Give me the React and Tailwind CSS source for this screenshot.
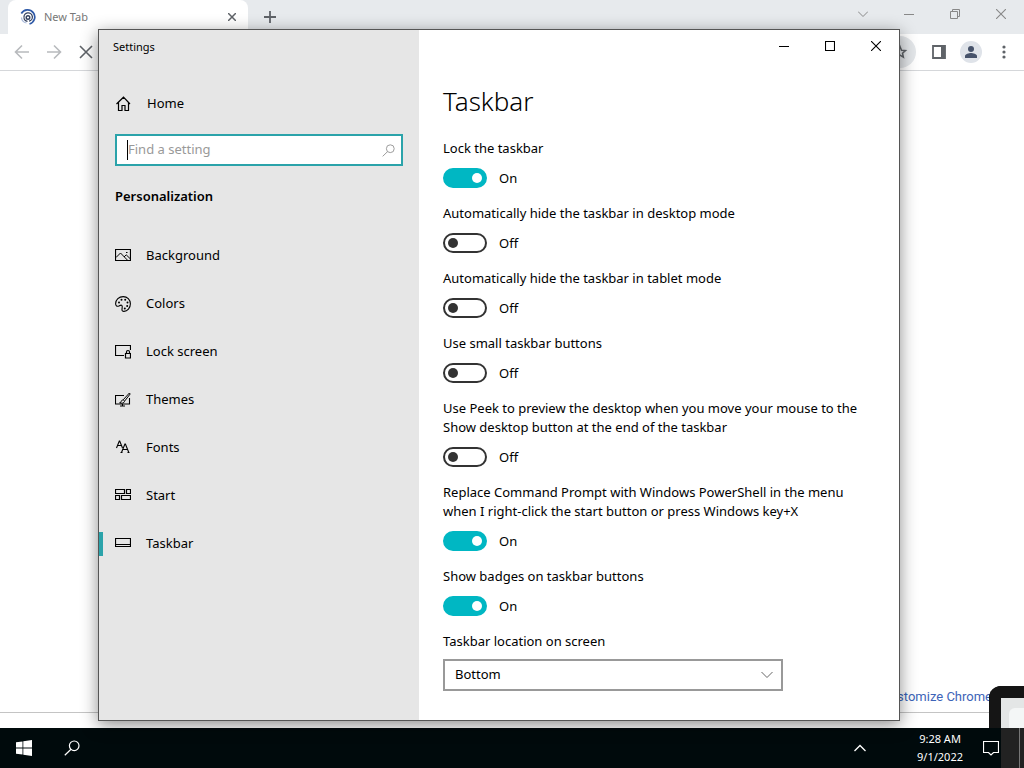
import { useState } from "react";

const navItems = [
  { label: "Background", Icon: BackgroundIcon },
  { label: "Colors", Icon: ColorsIcon },
  { label: "Lock screen", Icon: LockScreenIcon },
  { label: "Themes", Icon: ThemesIcon },
  { label: "Fonts", Icon: FontsIcon },
  { label: "Start", Icon: StartIcon },
  { label: "Taskbar", Icon: TaskbarIcon, active: true },
];

const options = [
  { id: "lock", label: "Lock the taskbar", on: true },
  { id: "hide-desktop", label: "Automatically hide the taskbar in desktop mode", on: false },
  { id: "hide-tablet", label: "Automatically hide the taskbar in tablet mode", on: false },
  { id: "small-buttons", label: "Use small taskbar buttons", on: false },
  {
    id: "peek",
    label:
      "Use Peek to preview the desktop when you move your mouse to the Show desktop button at the end of the taskbar",
    on: false,
  },
  {
    id: "powershell",
    label:
      "Replace Command Prompt with Windows PowerShell in the menu when I right-click the start button or press Windows key+X",
    on: true,
  },
  { id: "badges", label: "Show badges on taskbar buttons", on: true },
];

function Svg({ size = 16, className, children }) {
  return (
    <svg
      xmlns="http://www.w3.org/2000/svg"
      width={size}
      height={size}
      viewBox={`0 0 ${size} ${size}`}
      fill="none"
      stroke="currentColor"
      strokeWidth="1"
      className={className}
      aria-hidden="true"
    >
      {children}
    </svg>
  );
}

function HomeIcon() {
  return (
    <Svg>
      <path d="M1.5 8 8.500 1.200l6.500 6.800M3.500 6.500v8h3.500v-5h3v5h3.500v-8" strokeWidth="1.2" />
    </Svg>
  );
}

function BackgroundIcon() {
  return (
    <Svg>
      <path d="M.5 1.500h15v11H.5z" strokeWidth="1.2" />
      <path d="M1 9.500 5.500 5l7 7.200M9 9l2.200-2.200L15.500 11" />
      <path d="M11 4.500h1.500" />
    </Svg>
  );
}

function ColorsIcon() {
  return (
    <Svg>
      <path
        d="M8.200.6c4 0 7.200 3 7.200 7.200 0 4.200-3 7.600-6.400 7.600-1.700 0-2.200-1-2-2.300.2-1.500.7-2.800-.2-3.700-.8-.8-1.800 0-3 .6C2.200 10.700.6 10 .6 7.800.6 3.700 4 .6 8.200.6Z"
        strokeWidth="1.1"
      />
      <g fill="currentColor" stroke="none">
        <circle cx="4" cy="6.600" r="1" />
        <circle cx="6.500" cy="3.800" r="1" />
        <circle cx="10.200" cy="3.800" r="1" />
        <circle cx="12.500" cy="6.600" r="1" />
        <circle cx="12.200" cy="10" r="1" />
        <circle cx="9.800" cy="12.400" r="1" />
      </g>
    </Svg>
  );
}

function LockScreenIcon() {
  return (
    <Svg>
      <path d="M9 11.500H.5v-10h15V6" strokeWidth="1.2" />
      <path d="M10.500 9.500h5v4.500h-5zM11.500 9.500V8a1.500 1.500 0 0 1 3 0v1.500" strokeWidth="1.2" />
    </Svg>
  );
}

function ThemesIcon() {
  return (
    <Svg>
      <path d="M9 3.500H.5v8.500h14V6M7.500 12v2M5 14h5" strokeWidth="1.1" />
      <path d="m14.400 1-6.200 6.800 1.400 1.300L15.200 2zM8.200 8c-1.500 0-2 .8-2.200 2-.2.600-.8.800-1.400.8 2 .8 4.600.4 5-1.500" />
    </Svg>
  );
}

function FontsIcon() {
  return (
    <Svg>
      <path d="M1.500 8 4.300 1h.4l2.800 7M2.500 5.500h4" strokeWidth="1.1" />
      <path d="m6.500 12.500 3.400-8.500h.5l3.400 8.500M7.700 9.500h5M5.500 12.500h2M12.500 12.500h2" strokeWidth="1.1" />
    </Svg>
  );
}

function StartIcon() {
  return (
    <Svg>
      <path d="M.5 1.500h9v4h-9zM11.500 1.500h4v4h-4zM.5 7.500h4v4h-4zM6.500 7.500h9v4h-9z" strokeWidth="1.2" />
    </Svg>
  );
}

function TaskbarIcon() {
  return (
    <Svg>
      <path d="M.5 2.500h15v8H.5zM.5 8.500h15" strokeWidth="1.2" />
    </Svg>
  );
}

function SearchIcon({ size = 16, className }) {
  return (
    <svg
      width={size}
      height={size}
      viewBox="0 0 16 16"
      fill="none"
      stroke="currentColor"
      className={className}
      aria-hidden="true"
    >
      <circle cx="10.200" cy="5.800" r="4.800" strokeWidth="1.200" />
      <path d="M7 9.200.8 15.200" strokeWidth="1.200" />
    </svg>
  );
}

function MinimizeIcon() {
  return (
    <Svg size={10}>
      <path d="M0 5.500h10" />
    </Svg>
  );
}

function CloseIcon() {
  return (
    <Svg size={10}>
      <path d="m0 0 10 10M10 0 0 10" strokeWidth="1.1" />
    </Svg>
  );
}

function ChromeWindow() {
  return (
    <div className="flex h-full flex-col bg-white text-[#5f6368]">
      <div className="flex h-[34px] bg-[#e7eaed]">
        <div className="ml-2 flex w-60 items-center rounded-t-lg bg-white pr-2 pl-3">
          <svg width="16" height="16" viewBox="0 0 16 16" fill="none" aria-hidden="true">
            <path d="M1.300 4.500A7.200 7.200 0 1 1 9.500 15" stroke="#2f5aa8" strokeWidth="1.700" />
            <path d="M4 8.500a4.200 4.200 0 1 1 5 3.700" stroke="#33415f" strokeWidth="1.300" />
            <path d="M1.500 8.500a6 6 0 0 0 5 5.500" stroke="#a9badb" strokeWidth="1.200" />
            <circle cx="8" cy="8.500" r="1.800" stroke="#33415f" strokeWidth="1.400" />
            <path d="M4 8.500c0 2 1.500 3.500 3.500 3.800" stroke="#33415f" strokeWidth="1.200" />
          </svg>
          <span className="ml-2 flex-1 text-[11px] text-[#777]">New Tab</span>
          <button type="button" aria-label="Close tab" className="flex size-4 items-center justify-center">
            <Svg size={8}>
              <path d="m0 0 8 8M8 0 0 8" strokeWidth="1.500" />
            </Svg>
          </button>
        </div>
        <button type="button" aria-label="New tab" className="ml-4 flex items-center">
          <Svg size={12}>
            <path d="M6 0v12M0 6h12" strokeWidth="1.800" />
          </Svg>
        </button>
        <div className="ml-auto flex h-7 text-[#888]">
          <button type="button" aria-label="Search tabs" className="flex w-[46px] items-center justify-center">
            <Svg size={10}>
              <path d="m0 2.500 5 5 5-5" />
            </Svg>
          </button>
          <button type="button" aria-label="Minimize" className="flex w-[46px] items-center justify-center">
            <MinimizeIcon />
          </button>
          <button type="button" aria-label="Restore" className="flex w-[46px] items-center justify-center">
            <Svg size={10}>
              <path d="M.5 2.500h7v7h-7zM2.500 2.500v-2h7v7h-2" />
            </Svg>
          </button>
          <button type="button" aria-label="Close" className="flex w-[46px] items-center justify-center">
            <CloseIcon />
          </button>
        </div>
      </div>
      <div className="flex h-[37px] items-center border-b border-[#d5d7da] pr-3 pl-3.5">
        <button type="button" aria-label="Back" className="text-[#b8babd]">
          <Svg>
            <path d="M15 8H2M8 1.500 1.500 8 8 14.500" strokeWidth="1.600" />
          </Svg>
        </button>
        <button type="button" aria-label="Forward" className="ml-4 text-[#b8babd]">
          <Svg>
            <path d="M1 8h13M8 1.500 14.500 8 8 14.500" strokeWidth="1.600" />
          </Svg>
        </button>
        <button type="button" aria-label="Stop" className="ml-4">
          <Svg>
            <path d="m2 2 12 12M14 2 2 14" strokeWidth="1.600" />
          </Svg>
        </button>
        <div className="ml-auto flex items-center">
          <button
            type="button"
            aria-label="Bookmark"
            className="flex size-8 items-center justify-center rounded-full bg-[#e4e7ea]"
          >
            <Svg>
              <path
                d="m8 2.500 1.500 3.700 4 .3-3 2.700.9 4L8 11.200l-3.400 2 .9-4-3-2.700 4-.3z"
                strokeWidth="1.500"
              />
            </Svg>
          </button>
          <button type="button" aria-label="Side panel" className="ml-4">
            <Svg size={14}>
              <path d="M1 1h12v12H1z" strokeWidth="1.800" />
              <path d="M11 1v12" strokeWidth="4" />
            </Svg>
          </button>
          <button
            type="button"
            aria-label="Profile"
            className="ml-3.5 flex size-[22px] items-center justify-center rounded-full bg-[#dfe3e9] text-[#46526a]"
          >
            <svg width="14" height="14" viewBox="0 0 14 14" fill="currentColor" aria-hidden="true">
              <circle cx="7" cy="4" r="3" />
              <path d="M1 13v-2c0-2 4-3 6-3s6 1 6 3v2z" />
            </svg>
          </button>
          <button type="button" aria-label="Menu" className="ml-3.5">
            <svg width="16" height="16" viewBox="0 0 16 16" fill="currentColor" aria-hidden="true">
              <circle cx="8" cy="3" r="1.600" />
              <circle cx="8" cy="8" r="1.600" />
              <circle cx="8" cy="13" r="1.600" />
            </svg>
          </button>
        </div>
      </div>
      <div className="flex flex-1 items-end justify-end border-b border-[#c4c4c4] pr-8 pb-[5px]">
        <button type="button" className="font-[Roboto,sans-serif] text-[13px] leading-5 text-[#3d64b8]">
          Customize Chrome
        </button>
      </div>
      <div className="h-[15px]" />
    </div>
  );
}

function Sidebar() {
  return (
    <aside className="flex w-80 shrink-0 flex-col bg-[#e6e6e6]">
      <h1 className="px-3.5 pt-2 text-[11px] leading-[18px]">Settings</h1>
      <a href="#home" className="mt-6 flex h-12 items-center gap-4 px-4">
        <HomeIcon />
        Home
      </a>
      <label className="mx-4 mt-1.5 flex h-8 items-center border-2 border-[#2ba3aa] bg-white pr-1.5 pl-2.5">
        <span className="h-5 w-px bg-black" />
        <input
          type="text"
          aria-label="Find a setting"
          placeholder="Find a setting"
          className="min-w-0 flex-1 outline-none placeholder:text-[#999]"
        />
        <SearchIcon size={13} className="text-[#999]" />
      </label>
      <h2 className="mt-5 px-4 text-[13px] leading-5 font-semibold">Personalization</h2>
      <nav className="mt-[26px]">
        {navItems.map(({ label, Icon, active }) => (
          <a key={label} href={`#${label}`} className="flex h-12 items-center">
            <span className={active ? "h-6 w-1 bg-[#2ba3aa]" : "h-6 w-1"} />
            <span className="mr-[15px] ml-3">
              <Icon />
            </span>
            {label}
          </a>
        ))}
      </nav>
    </aside>
  );
}

function ToggleRow({ id, label, on }) {
  const [checked, setChecked] = useState(on);
  return (
    <div className="mb-4">
      <label htmlFor={id} className="block leading-[19px]">
        {label}
      </label>
      <div className="mt-2.5 flex h-5 items-center gap-3">
        <input
          id={id}
          type="checkbox"
          checked={checked}
          onChange={() => setChecked(!checked)}
          className="flex h-5 w-11 appearance-none items-center rounded-full border-2 border-[#333] px-[3px] before:size-2.5 before:rounded-full before:bg-[#333] checked:justify-end checked:border-[#00b7c3] checked:bg-[#00b7c3] checked:before:bg-white"
        />
        <span className="pt-0.5">{checked ? "On" : "Off"}</span>
      </div>
    </div>
  );
}

function SettingsWindow() {
  return (
    <section className="absolute top-[29px] right-[124px] bottom-[7px] left-[98px] flex border border-[#555] bg-white text-[13px] text-black shadow-[0_4px_16px_rgba(0,0,0,0.45)]">
      <Sidebar />
      <main className="min-w-0 flex-1">
        <div className="flex h-8 justify-end">
          <button type="button" aria-label="Minimize" className="flex w-[46px] items-center justify-center">
            <MinimizeIcon />
          </button>
          <button type="button" aria-label="Maximize" className="flex w-[46px] items-center justify-center">
            <Svg size={10}>
              <path d="M.5.5h9v9h-9z" strokeWidth="1.1" />
            </Svg>
          </button>
          <button type="button" aria-label="Close" className="flex w-[46px] items-center justify-center">
            <CloseIcon />
          </button>
        </div>
        <div className="px-6">
          <h2 className="mt-[22px] mb-5 text-[26px] leading-[35px] font-light">Taskbar</h2>
          {options.map((option) => (
            <ToggleRow key={option.id} {...option} />
          ))}
          <label htmlFor="location" className="block leading-[19px]">
            Taskbar location on screen
          </label>
          <div className="relative mt-2 max-w-[340px]">
            <select
              id="location"
              defaultValue="Bottom"
              className="h-8 w-full appearance-none border-2 border-[#999] bg-white pl-2.5"
            >
              <option>Left</option>
              <option>Top</option>
              <option>Right</option>
              <option>Bottom</option>
            </select>
            <Svg size={12} className="pointer-events-none absolute top-2.5 right-2.5 text-[#666]">
              <path d="m.5 3 5.500 5.500L11.500 3" />
            </Svg>
          </div>
        </div>
      </main>
    </section>
  );
}

function SystemTaskbar() {
  return (
    <footer className="flex h-10 shrink-0 items-center bg-[#000a0c] text-white">
      <button type="button" aria-label="Start" className="ml-4">
        <svg width="16" height="16" viewBox="0 0 16 16" fill="currentColor" aria-hidden="true">
          <path d="M0 2.300 6.500 1.400v6.200H0zM7.300 1.200 16 0v7.600H7.300zM0 8.400h6.500v6.200L0 13.700zM7.300 8.400H16V16l-8.700-1.200z" />
        </svg>
      </button>
      <button type="button" aria-label="Search" className="ml-8">
        <SearchIcon size={16} />
      </button>
      <button type="button" aria-label="Show hidden icons" className="ml-auto">
        <Svg size={12}>
          <path d="M.5 9 6 3.500 11.500 9" strokeWidth="1.300" />
        </Svg>
      </button>
      <div className="ml-[51px] text-center text-[11px] leading-[18px]">
        <div>9:28 AM</div>
        <div>9/1/2022</div>
      </div>
      <button type="button" aria-label="Notifications" className="mr-[25px] ml-5">
        <Svg>
          <path d="M.5 1.500h15v11h-5L8 15l-2.500-2.500h-5z" strokeWidth="1.200" />
        </Svg>
      </button>
    </footer>
  );
}

export default function App() {
  return (
    <div className="relative flex h-screen min-h-[768px] flex-col overflow-hidden font-['Noto_Sans','Open_Sans',sans-serif]">
      <div className="relative flex-1">
        <ChromeWindow />
        <SettingsWindow />
      </div>
      <SystemTaskbar />
      {/* corner of the overlay that hangs off the right edge */}
      <div className="pointer-events-none absolute right-0 bottom-10 h-[42px] w-[35px] rounded-tl-xl border-t-12 border-l-12 border-[#151515] bg-[#e4e6e6] pt-2.5 pl-2">
        <div className="h-full rounded-tl-md bg-[#f4f6f6]" />
      </div>
      <div className="pointer-events-none absolute right-0 bottom-0 flex h-10 w-[23px] justify-end bg-[#222] pr-1">
        <span className="w-px bg-[#777]" />
      </div>
    </div>
  );
}
